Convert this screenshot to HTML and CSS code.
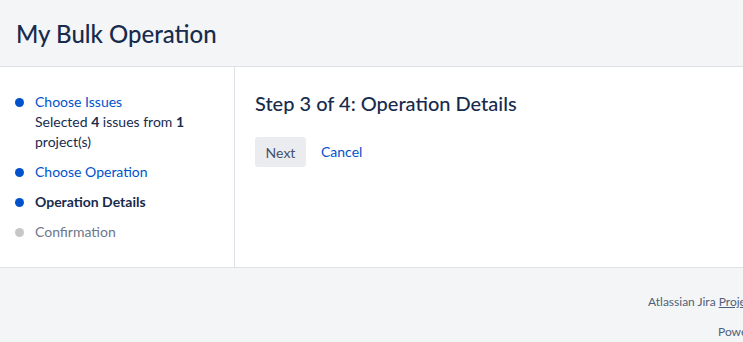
FILE: index.html
```html
<!DOCTYPE html>
<html lang="en">
<head>
    <meta charset="UTF-8">
    <meta name="viewport" content="width=device-width, initial-scale=1.0">
    <title>My Bulk Operation</title>
    <link rel="stylesheet" href="styles.css">
</head>
<body>
    <header class="page-header">
        <h1>My Bulk Operation</h1>
    </header>
    <div class="wizard">
        <aside class="steps">
            <ul>
                <li class="step done">
                    <a href="#">Choose Issues</a>
                    <div class="step-note">Selected <b>4</b> issues from <b>1</b> project(s)</div>
                </li>
                <li class="step done">
                    <a href="#">Choose Operation</a>
                </li>
                <li class="step current">
                    <span>Operation Details</span>
                </li>
                <li class="step todo">
                    <span>Confirmation</span>
                </li>
            </ul>
        </aside>
        <main class="step-content">
            <h2>Step 3 of 4: Operation Details</h2>
            <div class="buttons">
                <button class="btn">Next</button>
                <a href="#" class="btn-link">Cancel</a>
            </div>
        </main>
    </div>
    <footer class="page-footer">
        <p class="footer-line first">Atlassian Jira <a href="#">Project Management Software</a> (v9.12.2#9120002-sha1:301bf49)</p>
        <p class="footer-line second">Powered by a free Atlassian Jira evaluation license</p>
    </footer>
</body>
</html>
```

FILE: styles.css
```css
html, body {
    margin: 0;
    padding: 0;
    overflow: hidden;
}
body {
    font-family: Lato, "Noto Sans", "Liberation Sans", sans-serif;
    font-size: 14px;
    line-height: 20px;
    color: #172b4d;
    background-color: #f4f5f7;
}
.page-header {
    height: 66px;
    border-bottom: 1px solid #dfe1e6;
    display: flex;
    align-items: center;
    padding: 1px 16px 0 16px;
    box-sizing: border-box;
    height: 67px;
}
.page-header h1 {
    margin: 0;
    font-size: 24px;
    line-height: 28px;
    font-weight: 500;
    color: #172b4d;
}
.wizard {
    display: flex;
    height: 200px;
    background-color: #ffffff;
    border-bottom: 1px solid #dfe1e6;
}
.steps {
    width: 235px;
    border-right: 1px solid #dfe1e6;
    padding: 25px 0 0 0;
    box-sizing: border-box;
}
.steps ul {
    list-style: none;
    margin: 0;
    padding: 0;
}
.step {
    position: relative;
    padding-left: 35px;
    padding-right: 10px;
    margin-bottom: 10px;
}
.step::before {
    content: "";
    position: absolute;
    left: 15px;
    top: 6px;
    width: 9px;
    height: 9px;
    border-radius: 50%;
    background-color: #0052cc;
}
.step a {
    color: #0052cc;
    text-decoration: none;
}
.step.current span {
    font-weight: bold;
    color: #172b4d;
}
.step.todo span {
    color: #6b778c;
}
.step.todo::before {
    background-color: #c7c7c7;
}
.step-note b {
    font-weight: bold;
}
.step-content {
    flex: 1;
    padding: 24px 20px 0 20px;
}
.step-content h2 {
    margin: 0;
    font-size: 20px;
    line-height: 24px;
    font-weight: 500;
    color: #172b4d;
}
.buttons {
    display: flex;
    align-items: center;
    gap: 5px;
    margin-top: 22px;
}
.btn {
    font-family: inherit;
    font-size: 14px;
    height: 30px;
    padding: 0 10px;
    min-width: 51px;
    border: none;
    border-radius: 3px;
    background-color: #ebecf0;
    color: #42526e;
    cursor: pointer;
}
.btn-link {
    color: #0052cc;
    text-decoration: none;
    padding: 0 10px;
    line-height: 30px;
}
.page-footer {
    padding-top: 26px;
    font-size: 12px;
    line-height: 16px;
    color: #505f79;
    white-space: nowrap;
}
.footer-line {
    margin: 0 0 14px 0;
}
.footer-line.first {
    padding-left: 648px;
}
.footer-line.second {
    padding-left: 718px;
}
.footer-line a {
    color: #505f79;
    text-decoration: underline;
}
```
